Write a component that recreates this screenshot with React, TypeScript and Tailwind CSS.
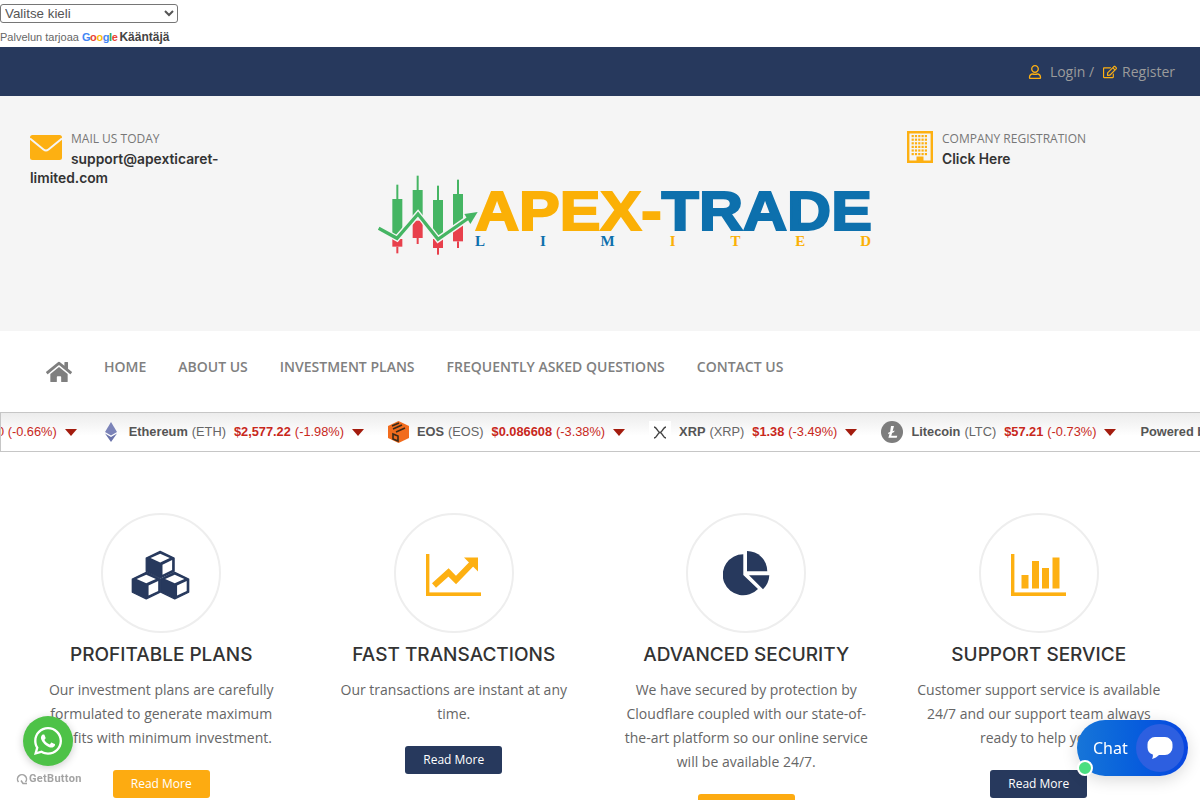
import React from "react";
import { FaHome, FaRegUser, FaRegEdit, FaWhatsapp } from "react-icons/fa";

const OS = "font-['Open_Sans',sans-serif]";

function TickerItem({ icon, name, sym, price, pct }: { icon: React.ReactNode; name: string; sym: string; price: string; pct: string }) {
  return (
    <div className="flex items-center shrink-0">
      {icon}
      <span className="font-bold text-[#555] ml-[8px]">{name}</span>
      <span className="text-[#666] ml-[4px]">({sym})</span>
      <span className="font-bold text-[#c8281c] ml-[8px]">{price}</span>
      <span className="text-[#c8281c] ml-[4px]">({pct})</span>
      <Tri />
    </div>
  );
}
function Tri() {
  return <span className="ml-[8px] w-0 h-0 border-x-[6.5px] border-x-transparent border-t-[7px] border-t-[#a31c0e]" />;
}

function Logo() {
  const candles = [
    [111, 72, 115, 225, 235, 258, 278],
    [172, 45, 88, 170, 180, 232, 250],
    [233, 75, 118, 225, 235, 262, 282],
    [293, 57, 100, 195, 195, 242, 262],
  ];
  return (
    <div className="flex items-start w-[495px]">
      <svg width="98" height="85" viewBox="50 40 294 255" className="shrink-0 overflow-visible mt-[-1px]">
        {candles.map(([x, t, g, ge, r, re, b], i) => (
          <g key={i}>
            <rect x={x - 3} y={t} width="6" height={g - t} fill="#45b563" />
            <rect x={x - 15} y={g} width="30" height={ge - g} fill="#45b563" />
            <rect x={x - 15} y={r} width="30" height={re - r} fill="#e8404c" />
            <rect x={x - 3} y={re} width="6" height={b - re} fill="#e8404c" />
          </g>
        ))}
        <polyline points="55,203 110,233 173,160 233,236 325,172" fill="none" stroke="#f5f5f5" strokeWidth="18" />
        <polyline points="55,203 110,233 173,160 233,236 325,172" fill="none" stroke="#45b563" strokeWidth="10" />
        <polygon points="352,154 312,160 330,190" fill="#45b563" />
      </svg>
      <div className="flex flex-col w-[397px] mt-[14px]">
        <div className="font-['Liberation_Sans',sans-serif] font-bold text-[55px] leading-[44px] whitespace-nowrap origin-left scale-x-[1.11]">
          <span className="text-[#fbb006] [-webkit-text-stroke:2px_#fbb006]">APEX-</span>
          <span className="text-[#0d70ad] [-webkit-text-stroke:2px_#0d70ad]">TRADE</span>
        </div>
        <div className="flex justify-between font-['Liberation_Serif',serif] font-bold text-[15px] leading-[14px] mt-[1px] pr-[1px]">
          <span className="text-[#0d70ad]">L</span>
          <span className="text-[#0d70ad]">I</span>
          <span className="text-[#0d70ad]">M</span>
          <span className="text-[#fbb006]">I</span>
          <span className="text-[#fbb006]">T</span>
          <span className="text-[#fbb006]">E</span>
          <span className="text-[#fbb006]">D</span>
        </div>
      </div>
    </div>
  );
}

function EnvelopeIcon() {
  return (
    <svg width="32" height="25" viewBox="0 0 32 25" className="float-left mr-[9px] mt-[4px]">
      <rect width="32" height="25" rx="2.5" fill="#fdb012" />
      <path d="M0 3.500L13.500 14.500Q16 16.500 18.500 14.500L32 3.500" fill="none" stroke="#f5f5f5" strokeWidth="2" />
    </svg>
  );
}

function BuildingIcon() {
  const dots = [];
  for (let r = 0; r < 6; r++) for (let c = 0; c < 5; c++) dots.push(<rect key={`${r}${c}`} x={4.6 + c * 3.3} y={4 + r * 3.6} width="2.2" height="2.2" />);
  return (
    <svg width="26" height="32" viewBox="0 0 26 32" fill="#fdb012">
      <path fillRule="evenodd" d="M0 0h26v32H0zM2.400 2.400v27.200h21.200V2.400z" />
      {dots}
      <rect x="9.500" y="25.500" width="7" height="5" />
    </svg>
  );
}

function CubesIcon() {
  const cube = (cx: number, cy: number) => (
    <g key={`${cx}-${cy}`}>
      <polygon
        points={`${cx},${cy} ${cx + 42},${cy + 20} ${cx + 42},${cy + 60} ${cx},${cy + 80} ${cx - 42},${cy + 60} ${cx - 42},${cy + 20}`}
        fill="#27395d"
        stroke="#27395d"
        strokeWidth="4"
        strokeLinejoin="round"
      />
      <polygon points={`${cx},${cy + 7} ${cx + 29},${cy + 20} ${cx},${cy + 33} ${cx - 29},${cy + 20}`} fill="#fff" />
      <polygon points={`${cx + 7},${cy + 40} ${cx + 36},${cy + 26} ${cx + 36},${cy + 56} ${cx + 7},${cy + 70}`} fill="#fff" />
    </g>
  );
  return (
    <svg width="59" height="50" viewBox="120 135 178 150" className="mt-[3px] -ml-[2px]">
      {cube(208, 139)}
      {cube(166, 202)}
      {cube(252, 202)}
    </svg>
  );
}

function LineChartIcon() {
  return (
    <svg width="56" height="42" viewBox="0 0 56 42" fill="#fdb012" className="mt-[3px]">
      <rect x="0" y="0" width="3.400" height="42" />
      <rect x="0" y="38.400" width="55" height="3.600" />
      <polyline points="8,31.500 22.500,18.500 30,26 46,9.500" fill="none" stroke="#fdb012" strokeWidth="6" />
      <polygon points="38,3.500 52,3.500 52,17.500" />
    </svg>
  );
}
function PieIcon() {
  return (
    <svg width="47" height="45" viewBox="0 0 47 45" fill="#27395d">
      <path d="M20.300 3.300A20.500 20.500 0 1 0 35 38L20.300 24z" />
      <path d="M24 0A20.300 20.300 0 0 1 44.300 20.300H24z" />
      <path d="M26 24.300H46.300A20.500 20.500 0 0 1 40 38.300z" />
    </svg>
  );
}
function BarsIcon() {
  return (
    <svg width="56" height="42" viewBox="0 0 56 42" fill="#fdb012" className="mt-[3px]">
      <rect x="0" y="0" width="3.400" height="42" />
      <rect x="0" y="38.400" width="55" height="3.600" />
      <rect x="10.500" y="21" width="7" height="13.500" />
      <rect x="21" y="7" width="7" height="27.500" />
      <rect x="31" y="14" width="7" height="20.500" />
      <rect x="41.500" y="3.500" width="7" height="31" />
    </svg>
  );
}

function Feature({ icon, title, text, navyBtn }: { icon: React.ReactNode; title: string; text: string; navyBtn?: boolean }) {
  return (
    <div className="px-[15px] flex flex-col items-center text-center">
      <div className="w-[120px] h-[120px] rounded-full border-2 border-[#eeeeee] flex items-center justify-center">{icon}</div>
      <h3 className="font-['Inter',sans-serif] font-medium text-[19px] leading-[24px] text-[#333] mt-[10px] whitespace-nowrap">{title}</h3>
      <p className="text-[14px] leading-[24px] text-[#666] mt-[11px]">{text}</p>
      <a className={`mt-[20px] w-[97px] h-[28px] shrink-0 rounded-[3px] text-white text-[12px] flex items-center justify-center ${navyBtn ? "bg-[#27395d]" : "bg-[#fdab11]"}`}>Read More</a>
    </div>
  );
}

export default function App() {
  return (
    <div className={`h-screen overflow-hidden bg-white ${OS}`}>
      <div className="h-[47px] pt-[4px] font-['Liberation_Sans',sans-serif]">
        <select className="block w-[178px] h-[19px] border border-[#767676] rounded-[3px] text-[13.33px] text-[#555] bg-white">
          <option>Valitse kieli</option>
        </select>
        <div className="flex items-center text-[11px] leading-[14px] text-[#666] mt-[7px] whitespace-nowrap">
          <span>Palvelun tarjoaa</span>
          <span className="ml-[3px] font-bold tracking-[-0.4px] text-[11px]">
            <span className="text-[#4285f4]">G</span><span className="text-[#ea4335]">o</span><span className="text-[#fbbc05]">o</span><span className="text-[#4285f4]">g</span><span className="text-[#34a853]">l</span><span className="text-[#ea4335]">e</span>
          </span>
          <span className="ml-[2px] font-bold text-[#444] text-[12px]">Kääntäjä</span>
        </div>
      </div>

      <header className="h-[49px] bg-[#27395d] flex items-center justify-end pr-[25px] text-[14px] text-[#9b9b9b]">
        <FaRegUser className="text-[#fdb012] text-[14px]" />
        <span className="ml-[8px]">Login /</span>
        <FaRegEdit className="text-[#fdb012] text-[14px] ml-[9px]" />
        <span className="ml-[5px]">Register</span>
      </header>

      <section className="h-[235px] bg-[#f5f5f5] grid grid-cols-[320px_1fr_293px] pl-[30px]">
        <div className="pt-[35px] w-[195px]">
          <EnvelopeIcon />
          <div className="text-[12px] leading-[16px] text-[#777]">MAIL US TODAY</div>
          <div className="font-['Inter',sans-serif] font-semibold text-[13.8px] leading-[19px] text-[#333] mt-[3px]">support@apexticaret-limited.com</div>
        </div>
        <div className="pt-[79px] pl-[27px]">
          <Logo />
        </div>
        <div className="pt-[35px] flex">
          <div className="shrink-0"><BuildingIcon /></div>
          <div className="ml-[9px]">
            <div className="text-[12px] leading-[16px] text-[#777]">COMPANY REGISTRATION</div>
            <div className="font-['Inter',sans-serif] font-semibold text-[13.8px] leading-[19px] text-[#333] mt-[3px]">Click Here</div>
          </div>
        </div>
      </section>

      <nav className="h-[81px] flex items-start pt-[25px] pl-[46px] text-[14px] font-semibold text-[#808080] uppercase">
        <FaHome className="text-[#7f7f7f] text-[26px] mt-[3px]" />
        <div className="flex gap-[32px] ml-[32px]">
          <span>Home</span>
          <span>About Us</span>
          <span>Investment Plans</span>
          <span>Frequently Asked Questions</span>
          <span>Contact Us</span>
        </div>
      </nav>

      <div className="h-[40px] border border-[#c6c6c6] border-r-0 bg-gradient-to-b from-[#ececec] to-white to-60% overflow-hidden flex items-center font-['Liberation_Sans',sans-serif] text-[12.8px] whitespace-nowrap">
        <div className="flex items-center gap-[24px] -ml-[4px]">
          <div className="flex items-center shrink-0">
            <span className="text-[#c8281c]">0 (-0.66%)</span>
            <Tri />
          </div>
          <TickerItem
            icon={<svg width="16" height="20" viewBox="0 0 16 20" className="ml-[2px] mr-[2px]"><polygon points="8,0 14,10 8,13.500 2,10" fill="#7b83b8" /><polygon points="8,15 14,11.500 8,20 2,11.500" fill="#6b74ab" /></svg>}
            name="Ethereum" sym="ETH" price="$2,577.22" pct="-1.98%" />
          <TickerItem
            icon={<svg width="21" height="22" viewBox="0 0 21 22"><polygon points="10.500,0 21,5 21,17 10.500,22 0,17 0,5" fill="#f26c1d" /><path d="M4 5l7-3M5 8l9-4M8 11l9-4M5 13v5l5 2v-5z" stroke="#3a2a1a" strokeWidth="1.600" fill="none" /></svg>}
            name="EOS" sym="EOS" price="$0.086608" pct="-3.38%" />
          <TickerItem
            icon={<span className="w-[22px] h-[22px] bg-white flex items-center justify-center"><svg width="14" height="13" viewBox="0 0 14 13" fill="none" stroke="#444" strokeWidth="1.400"><path d="M1 1c3 0 3.500 5.500 6 5.500S10 1 13 1M1 12c3 0 3.500-5.500 6-5.500S10 12 13 12" /></svg></span>}
            name="XRP" sym="XRP" price="$1.38" pct="-3.49%" />
          <TickerItem
            icon={<svg width="22" height="22" viewBox="0 0 22 22"><circle cx="11" cy="11" r="11" fill="#7d7d7d" /><path d="M10 5h3l-1.400 5.200 2-.8-.5 1.700-2 .8-.8 2.900h6l-.6 2H7.400l1.200-4.200-1.600.6.500-1.600 1.600-.6z" fill="#fff" /></svg>}
            name="Litecoin" sym="LTC" price="$57.21" pct="-0.73%" />
          <span className="font-bold text-[#555]">Powered by</span>
        </div>
      </div>

      <div className="mx-[15px] mt-[61px] grid grid-cols-4 items-start">
        <Feature icon={<CubesIcon />} title="PROFITABLE PLANS" text="Our investment plans are carefully formulated to generate maximum profits with minimum investment." />
        <Feature icon={<LineChartIcon />} title="FAST TRANSACTIONS" text="Our transactions are instant at any time." navyBtn />
        <Feature icon={<PieIcon />} title="ADVANCED SECURITY" text="We have secured by protection by Cloudflare coupled with our state-of-the-art platform so our online service will be available 24/7." />
        <Feature icon={<BarsIcon />} title="SUPPORT SERVICE" text="Customer support service is available 24/7 and our support team always ready to help you." navyBtn />
      </div>

      <div className="fixed left-[23px] top-[716px] w-[50px] h-[50px] rounded-full bg-[#4dc247] shadow-[0_2px_8px_rgba(0,0,0,0.2)] flex items-center justify-center">
        <FaWhatsapp className="text-white text-[32px]" />
      </div>
      <div className="fixed left-[16px] top-[772px] flex items-center gap-[1px] text-[#a3a3a3] text-[11px] font-bold leading-[14px] tracking-[0.3px] font-['Roboto',sans-serif]">
        <svg width="12" height="12" viewBox="0 0 12 12" fill="none" stroke="#a3a3a3" strokeWidth="1.500"><path d="M2.500 9A4.500 4.500 0 1 1 9.500 9M5 7.500l2 3h4" /></svg>
        <span>GetButton</span>
      </div>

      <div className="fixed left-[1077px] top-[720px] w-[111px] h-[56px] rounded-full bg-gradient-to-r from-[#1775d8] to-[#0a45e0] shadow-[0_4px_16px_rgba(0,0,0,0.15)] flex items-center font-['Noto_Sans',sans-serif]">
        <span className="text-white text-[16px] ml-[16px]">Chat</span>
        <div className="absolute left-[59px] top-[4px] w-[48px] h-[48px] rounded-full bg-[#2d5fe0] flex items-center justify-center">
          <svg width="26" height="24" viewBox="0 0 26 24" fill="#fff"><path d="M8 1h10a7.500 7.500 0 0 1 7.500 7.500v3A7.500 7.500 0 0 1 18 19h-6c-2 2-4 3-7 4 1-2 1-3 .8-4.500A7.500 7.500 0 0 1 .500 11.500v-3A7.500 7.500 0 0 1 8 1z" /></svg>
        </div>
        <span className="absolute left-[0px] top-[40px] w-[16px] h-[16px] rounded-full bg-[#4ade80] border-2 border-white" />
      </div>
    </div>
  );
}
